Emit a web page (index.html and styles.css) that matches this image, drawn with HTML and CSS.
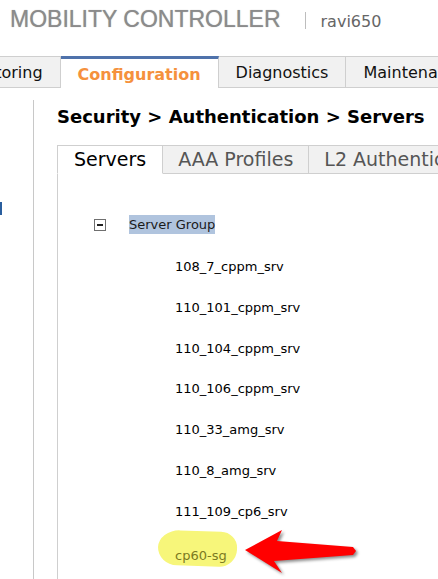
FILE: index.html
```html
<!DOCTYPE html>
<html>
<head>
<meta charset="utf-8">
<link rel="stylesheet" href="styles.css">
</head>
<body>
<div class="page">
  <header class="brand">
    <span class="product">MOBILITY CONTROLLER</span>
    <span class="sep"></span>
    <span class="host">ravi650</span>
  </header>
  <nav class="tabs">
    <span class="tab first">Monitoring</span>
    <span class="tab active">Configuration</span>
    <span class="tab">Diagnostics</span>
    <span class="tab">Maintenance</span>
  </nav>
  <div class="body">
    <aside class="side"><span class="side-mark"></span></aside>
    <main class="main">
      <h1 class="title">Security &gt; Authentication &gt; Servers</h1>
      <div class="subtabs">
        <span class="subtab active">Servers</span>
        <span class="subtab">AAA Profiles</span>
        <span class="subtab">L2 Authentication</span>
      </div>
      <div class="panel">
        <div class="group">
          <span class="toggle"></span>
          <span class="group-label">Server Group</span>
        </div>
        <ul class="items">
          <li class="item">108_7_cppm_srv</li>
          <li class="item">110_101_cppm_srv</li>
          <li class="item">110_104_cppm_srv</li>
          <li class="item">110_106_cppm_srv</li>
          <li class="item">110_33_amg_srv</li>
          <li class="item">110_8_amg_srv</li>
          <li class="item">111_109_cp6_srv</li>
          <li class="item marked"><span class="highlight">cp60-sg</span></li>
        </ul>
      </div>
    </main>
  </div>
  <svg class="annotation" width="438" height="579" viewBox="0 0 438 579">
    <polygon class="arrow" points="245,550 282,530 277,541 353,547 356,551 353,555 274,561 282,573"/>
  </svg>
</div>
</body>
</html>
```
FILE: styles.css
```css
html, body {
  margin: 0;
  padding: 0;
  background: #ffffff;
}

.page {
  position: relative;
  width: 438px;
  height: 579px;
  overflow: hidden;
  font-family: "DejaVu Sans", Verdana, sans-serif;
  color: #000;
}

.brand {
  height: 56px;
  box-sizing: border-box;
  padding: 6px 0 0 10px;
  display: flex;
  align-items: flex-start;
}

.product {
  font-family: "Liberation Sans", Arial, sans-serif;
  font-size: 23px;
  color: #8b8b8b;
  text-shadow: 0 0 1px #a8a8a8;
  white-space: nowrap;
}

.sep {
  width: 0;
  height: 17px;
  border-left: 1px solid #bdbdbd;
  margin: 6px 15px 0 24px;
}

.host {
  font-size: 16px;
  color: #666;
  margin-top: 6px;
}

.tabs {
  display: flex;
  height: 32px;
  white-space: nowrap;
}

.tab {
  box-sizing: border-box;
  height: 32px;
  padding: 2px 17px 0;
  line-height: 28px;
  font-size: 16px;
  color: #111;
  background: #f1f1f1;
  border-top: 1px solid #cfcfcf;
  border-bottom: 1px solid #cfcfcf;
  border-right: 1px solid #cfcfcf;
  flex: none;
}

.tab.first {
  margin-left: -60px;
}

.tab.active {
  background: #fff;
  border-top: 3px solid #4f72ab;
  border-bottom: none;
  padding-top: 2px;
  line-height: 27px;
  font-weight: bold;
  font-size: 16px;
  color: #f5913d;
}

.body {
  display: flex;
  margin-top: 12px;
  height: 491px;
}

.side {
  width: 33px;
  flex: none;
  border-right: 1px solid #c8c8c8;
}

.side-mark {
  display: block;
  width: 2px;
  height: 13px;
  margin-top: 102px;
  background: #2a5e9e;
}

.main {
  flex: 1;
  padding-left: 23px;
  display: flex;
  flex-direction: column;
}

.title {
  margin: 6px 0 0;
  font-size: 18px;
  font-weight: bold;
  line-height: normal;
  white-space: nowrap;
}

.subtabs {
  display: flex;
  margin-top: 18px;
  white-space: nowrap;
}

.subtab {
  flex: none;
  box-sizing: border-box;
  padding: 0 15px;
  line-height: 27px;
  font-size: 19px;
  color: #555;
  background: #f1f1f1;
  border-top: 1px solid #cfcfcf;
  border-right: 1px solid #cfcfcf;
  border-bottom: 1px solid #cfcfcf;
}

.subtab.active {
  padding: 0 16px;
  color: #000;
  background: #fff;
  border-left: 1px solid #cfcfcf;
  border-bottom-color: #fff;
}

.panel {
  flex: 1;
  border-left: 1px solid #cfcfcf;
  padding: 41px 0 0 36px;
  font-size: 13px;
}

.group {
  display: flex;
  align-items: center;
  height: 19px;
  margin-bottom: 13px;
}

.toggle {
  position: relative;
  box-sizing: border-box;
  width: 12px;
  height: 12px;
  border: 1px solid #6f6f6f;
  background: #fff;
  margin-right: 23px;
}

.toggle::after {
  content: "";
  position: absolute;
  left: 2px;
  right: 2px;
  top: 4px;
  height: 2px;
  background: #222;
}

.group-label {
  display: inline-block;
  line-height: 19px;
  background: #b0c4de;
  color: #1a1a1a;
}

.items {
  list-style: none;
  margin: 0 0 0 81px;
  padding: 0;
}

.item {
  height: 40.8px;
  line-height: 40.8px;
  white-space: nowrap;
}

.item.marked {
  position: relative;
  z-index: 0;
  line-height: 45px;
}

.highlight {
  position: relative;
  color: #7b7a22;
}

.highlight::before {
  content: "";
  position: absolute;
  z-index: -1;
  left: -17px;
  top: -17px;
  width: 79px;
  height: 35px;
  background: #f7f67a;
  border-radius: 22px 17px 18px 20px / 18px 16px 18px 18px;
  transform: rotate(2deg);
}

.annotation {
  position: absolute;
  left: 0;
  top: 0;
  pointer-events: none;
}

.arrow {
  fill: #ff0000;
  filter: drop-shadow(2px 2px 1.5px rgba(0, 0, 0, 0.45));
}
```
